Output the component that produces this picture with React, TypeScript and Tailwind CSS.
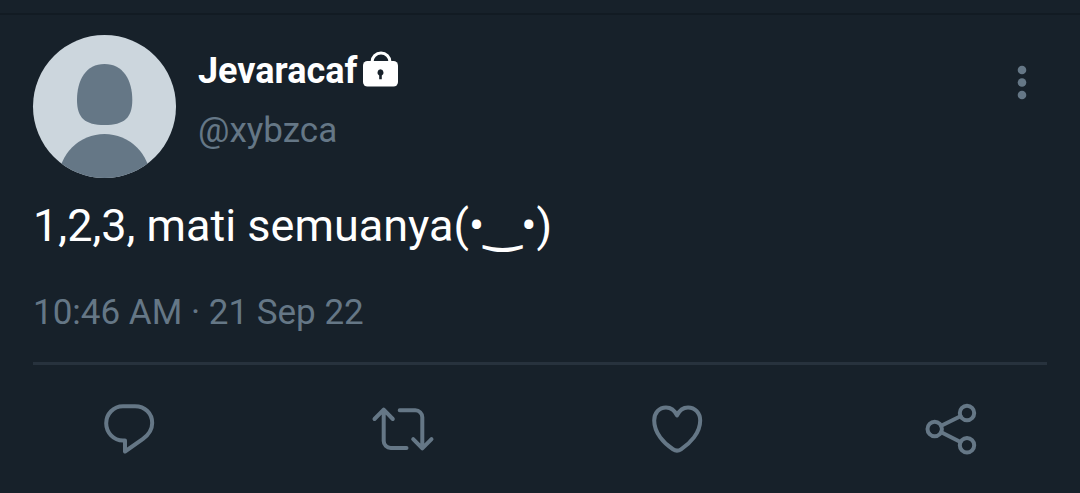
import React from "react";

interface TweetAction {
  label: string;
  icon: React.ReactNode;
}

const actions: TweetAction[] = [
  {
    label: "Reply",
    icon: (
      <path d="M26 9.2H38C48 9.2 55.2 16.500 55.2 26C55.2 33 52 37.500 46 41.800L28 54.500V43.500H26C16.500 43.500 9.200 35.500 9.200 26.300C9.200 17 16.500 9.200 26 9.200Z" />
    ),
  },
  {
    label: "Retweet",
    icon: (
      <>
        <path d="M3.500 22L12.700 12.700L21.800 22M12.700 13V44A7 7 0 0 0 19.700 51H35.500" />
        <path d="M42.200 42.200L51.300 51.300L60.500 42.200M51.300 51V20.300A7 7 0 0 0 44.300 13.300H28.700" />
      </>
    ),
  },
  {
    label: "Like",
    icon: (
      <path d="M32 18.500C29.500 13 25 10.500 21 10.500C14 10.500 9.200 16 9.200 23.500C9.200 36 19 46.500 28 52.300Q32 55 36 52.300C45 46.500 55.200 36 55.200 23.500C55.200 16 50 10.500 43 10.500C39 10.500 34.500 13 32 18.500Z" />
    ),
  },
  {
    label: "Share",
    icon: (
      <>
        <circle cx="15.700" cy="32" r="7.200" />
        <circle cx="48" cy="16" r="7.200" />
        <circle cx="48" cy="48.200" r="7.200" />
        <path d="M22.200 28.800L41.500 19.200M22.200 35.200L41.500 45" />
      </>
    ),
  },
];

function Avatar() {
  return (
    <svg viewBox="0 0 143 143" className="size-[143px] shrink-0 rounded-full bg-[#ccd6dd]" aria-hidden="true">
      <path
        d="M71.500 29C90 29 99.300 45 99.300 65C99.300 83 91 90 71.500 90C52 90 44 83 44 65C44 45 53 29 71.500 29Z"
        fill="#657786"
      />
      <circle cx="71.500" cy="145" r="46" fill="#657786" />
    </svg>
  );
}

function LockIcon() {
  return (
    <svg viewBox="0 0 36 40" className="h-10 w-9" role="img" aria-label="Protected account">
      <path d="M9 13V11A9 9 0 0 1 27 11V13" fill="none" stroke="white" strokeWidth="3" />
      <rect x="0" y="10" width="35" height="25.500" rx="4.500" fill="white" />
      <path d="M17.500 18.300A3.300 3.300 0 0 0 16.200 24.500V28.300H18.800V24.500A3.300 3.300 0 0 0 17.500 18.300Z" fill="#17212a" />
    </svg>
  );
}

export default function App() {
  return (
    <main className="border-b-2 border-[#101820] bg-[#17212a] font-[Roboto,sans-serif] text-[#657786]">
      <div className="h-[15px] border-b-2 border-[#121b23]" />

      <article className="px-[33px] pt-5">
        <header className="flex items-start">
          <Avatar />
          <div className="ml-[22px] min-w-0 flex-1 pt-3">
            <div className="flex items-center gap-1.5">
              <h1 className="text-[36px] leading-[48px] font-bold text-white">Jevaracaf</h1>
              <LockIcon />
            </div>
            <a href="#profile" className="mt-3 block w-fit text-[35px] leading-[48px]">
              @xybzca
            </a>
          </div>
          <button type="button" aria-label="More options" className="mt-6 h-12">
            <svg viewBox="0 0 48 48" className="size-12" fill="currentColor">
              <circle cx="23" cy="11" r="4.300" />
              <circle cx="23" cy="23.500" r="4.300" />
              <circle cx="23" cy="36" r="4.300" />
            </svg>
          </button>
        </header>

        <p className="mt-5 text-[45px] leading-[56px] text-white">
          1,2,3, mati semuanya(•<span className="font-['DejaVu_Sans',sans-serif] font-bold">‿</span>•)
        </p>

        <time dateTime="2022-09-21T10:46" className="mt-9 block text-[35px] leading-[46px]">
          10:46 AM · 21 Sep 22
        </time>

        <div className="mt-[26px] border-t-3 border-[#27323d]" />

        <div className="flex justify-between px-16 py-8">
          {actions.map((action) => (
            <button key={action.label} type="button" aria-label={action.label}>
              <svg
                viewBox="0 0 64 64"
                className="size-16"
                fill="none"
                stroke="currentColor"
                strokeWidth="4"
                strokeLinecap="round"
                strokeLinejoin="round"
              >
                {action.icon}
              </svg>
            </button>
          ))}
        </div>
      </article>
    </main>
  );
}
